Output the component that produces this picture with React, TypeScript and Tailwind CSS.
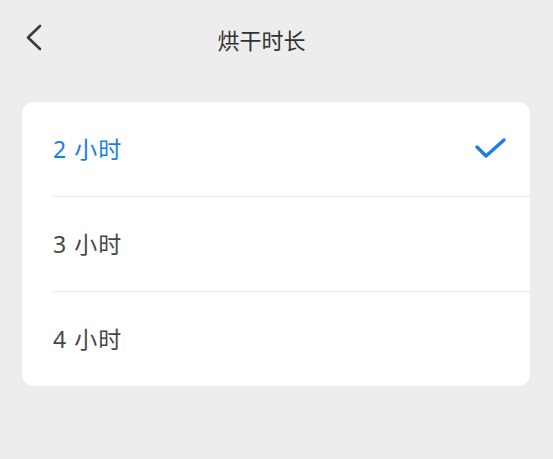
import React from "react";

const options = ["2 小时", "3 小时", "4 小时"];

const App = () => {
  const [selected, setSelected] = React.useState(0);

  return (
    <div
      className="min-h-[459px] w-full bg-[#ededed]"
      style={{ fontFamily: '"Noto Sans", "Noto Sans CJK SC", sans-serif' }}
    >
      <div className="relative flex h-[80px] items-center justify-center pr-[30px]">
        <button className="absolute left-[24px] top-[24px] p-0">
          <svg width="20" height="28" viewBox="0 0 20 28" fill="none">
            <path
              d="M16 2L4 13.5L16 25"
              stroke="#3a3a3a"
              strokeWidth="2.6"
              strokeLinecap="round"
              strokeLinejoin="round"
            />
          </svg>
        </button>
        <h1 className="text-[22px] leading-none text-[#333]">烘干时长</h1>
      </div>

      <div className="mx-[22px] mt-[22px] w-[508px] overflow-hidden rounded-[12px] bg-white">
        {options.map((label, i) => (
          <div key={label} className="pl-[31px]">
            <button
              onClick={() => setSelected(i)}
              className="flex h-[94px] w-full items-center justify-between pr-[21px] text-left"
            >
              <span
                className={
                  selected === i
                    ? "text-[23px] tracking-[1px] text-[#1a7ee6]"
                    : "text-[23px] tracking-[1px] text-[#474747]"
                }
              >
                {label}
              </span>
              {selected === i && (
                <svg width="36" height="28" viewBox="0 0 36 28" fill="none">
                  <path
                    d="M4 12L13 21L31 5"
                    stroke="#1a7ee6"
                    strokeWidth="3.4"
                    strokeLinecap="round"
                    strokeLinejoin="round"
                  />
                </svg>
              )}
            </button>
            {i < options.length - 1 && <div className="h-px bg-[#e8e8e8]" />}
          </div>
        ))}
      </div>
    </div>
  );
};

export default App;
